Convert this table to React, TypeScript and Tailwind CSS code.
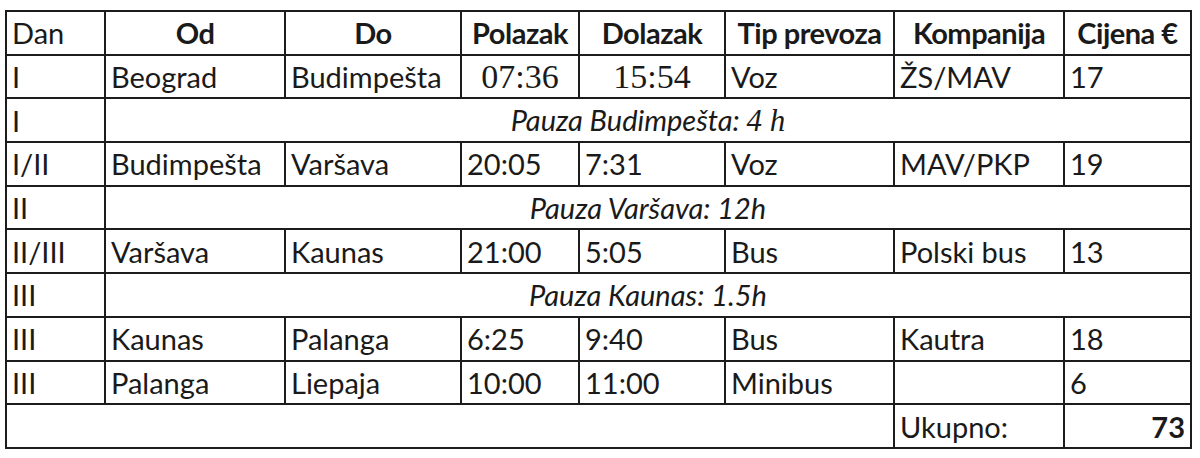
const cols = [99, 180, 176, 118, 146, 169, 170, 127];

type Row = {
  dan: string;
  od: string;
  do: string;
  polazak: string;
  dolazak: string;
  tip: string;
  kompanija: string;
  cijena: string;
  serif?: boolean;
};

type Pause = { dan: string; pause: React.ReactNode };

const rows: (Row | Pause)[] = [
  { dan: 'I', od: 'Beograd', do: 'Budimpešta', polazak: '07:36', dolazak: '15:54', tip: 'Voz', kompanija: 'ŽS/MAV', cijena: '17', serif: true },
  {
    dan: 'I',
    pause: (
      <>
        Pauza Budimpešta: <span className="font-['Liberation_Serif',serif] text-[31px]">4 h</span>
      </>
    ),
  },
  { dan: 'I/II', od: 'Budimpešta', do: 'Varšava', polazak: '20:05', dolazak: '7:31', tip: 'Voz', kompanija: 'MAV/PKP', cijena: '19' },
  { dan: 'II', pause: 'Pauza Varšava: 12h' },
  { dan: 'II/III', od: 'Varšava', do: 'Kaunas', polazak: '21:00', dolazak: '5:05', tip: 'Bus', kompanija: 'Polski bus', cijena: '13' },
  { dan: 'III', pause: 'Pauza Kaunas: 1.5h' },
  { dan: 'III', od: 'Kaunas', do: 'Palanga', polazak: '6:25', dolazak: '9:40', tip: 'Bus', kompanija: 'Kautra', cijena: '18' },
  { dan: 'III', od: 'Palanga', do: 'Liepaja', polazak: '10:00', dolazak: '11:00', tip: 'Minibus', kompanija: '', cijena: '6' },
];

const td = 'border-2 border-[#1c1c1c] h-[43.7px] px-[5px] py-0 leading-none whitespace-nowrap';

export default function App() {
  return (
    <div className="w-[1200px] h-[458px] bg-white pl-[5px] pt-[10px] text-[#1a1a1a] font-['Lato',sans-serif] text-[29px]">
      <table className="table-fixed border-collapse w-[1185px]">
        <colgroup>
          {cols.map((w, i) => (
            <col key={i} style={{ width: w }} />
          ))}
        </colgroup>
        <thead>
          <tr>
            <td className={td}>Dan</td>
            {['Od', 'Do', 'Polazak', 'Dolazak', 'Tip prevoza', 'Kompanija', 'Cijena €'].map((h) => (
              <td key={h} className={`${td} text-center font-bold tracking-[-0.5px] px-0`}>
                {h}
              </td>
            ))}
          </tr>
        </thead>
        <tbody>
          {rows.map((r, i) =>
            'pause' in r ? (
              <tr key={i}>
                <td className={td}>{r.dan}</td>
                <td colSpan={7} className={`${td} text-center italic`}>
                  {r.pause}
                </td>
              </tr>
            ) : (
              <tr key={i}>
                <td className={td}>{r.dan}</td>
                <td className={td}>{r.od}</td>
                <td className={td}>{r.do}</td>
                {r.serif ? (
                  <>
                    <td className={`${td} text-center font-['Liberation_Serif',serif] text-[34px]`}>{r.polazak}</td>
                    <td className={`${td} text-center font-['Liberation_Serif',serif] text-[34px]`}>{r.dolazak}</td>
                  </>
                ) : (
                  <>
                    <td className={td}>{r.polazak}</td>
                    <td className={td}>{r.dolazak}</td>
                  </>
                )}
                <td className={td}>{r.tip}</td>
                <td className={td}>{r.kompanija}</td>
                <td className={td}>{r.cijena}</td>
              </tr>
            )
          )}
          <tr>
            <td colSpan={6} className={td}></td>
            <td className={td}>Ukupno:</td>
            <td className={`${td} text-right font-bold`}>73</td>
          </tr>
        </tbody>
      </table>
    </div>
  );
}
